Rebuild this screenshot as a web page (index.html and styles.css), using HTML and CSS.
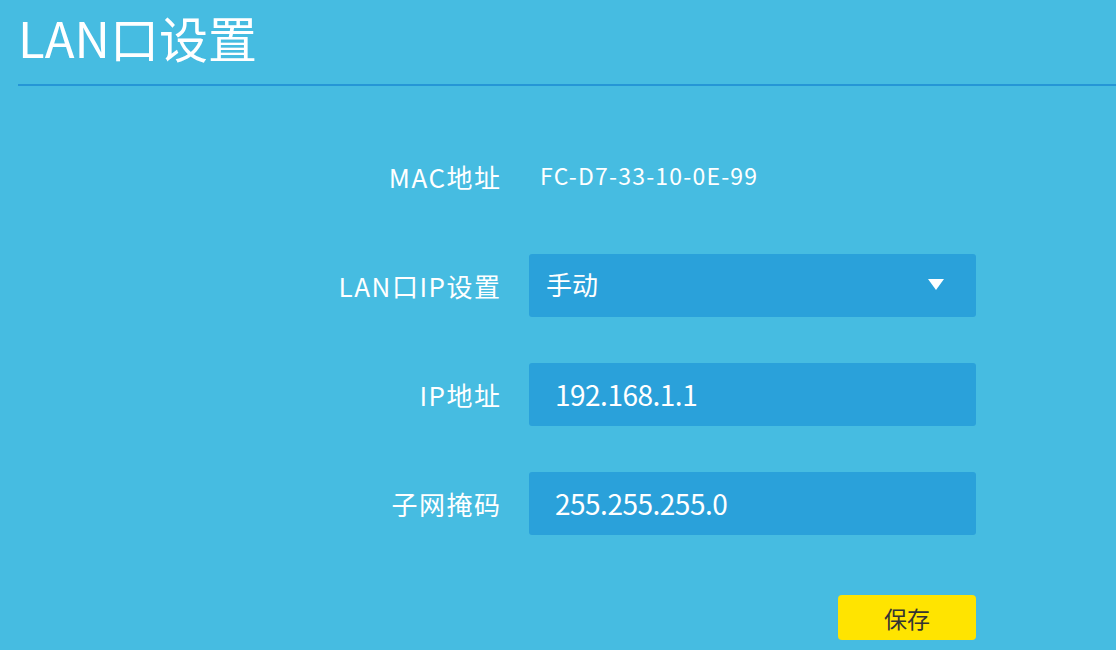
FILE: index.html
```html
<!DOCTYPE html>
<html lang="zh-CN">
<head>
<meta charset="utf-8">
<title>LAN口设置</title>
<link rel="stylesheet" href="styles.css">
</head>
<body>
<div class="page">
  <header class="head">
    <h1 class="title">LAN口设置</h1>
  </header>
  <form class="form">
    <div class="row">
      <label class="label">MAC地址</label>
      <div class="value">FC-D7-33-10-0E-99</div>
    </div>
    <div class="row">
      <label class="label">LAN口IP设置</label>
      <div class="field select">
        <span class="select-text">手动</span>
        <svg class="caret" width="16" height="11" viewBox="0 0 16 11"><path d="M0 0H16L8 11Z" fill="#fff"/></svg>
      </div>
    </div>
    <div class="row">
      <label class="label">IP地址</label>
      <div class="field input">192.168.1.1</div>
    </div>
    <div class="row">
      <label class="label">子网掩码</label>
      <div class="field input">255.255.255.0</div>
    </div>
    <div class="actions">
      <button type="button" class="save">保存</button>
    </div>
  </form>
</div>
</body>
</html>
```
FILE: styles.css
```css
html, body {
  margin: 0;
  padding: 0;
}
body {
  background: #46bce1;
  font-family: "Noto Sans CJK SC", "Noto Sans", sans-serif;
  color: #fff;
  width: 1116px;
  height: 650px;
  overflow: hidden;
}
.page {
  display: flex;
  flex-direction: column;
}
.head {
  margin-left: 18px;
  height: 84px;
  border-bottom: 2px solid #2596d6;
  display: flex;
  align-items: flex-start;
}
.title {
  margin: 0;
  font-weight: 400;
  font-size: 49px;
  line-height: 1;
  padding-top: 12px;
  letter-spacing: 0;
}
.form {
  display: flex;
  flex-direction: column;
  gap: 45px;
  margin-top: 58px;
}
.row {
  display: flex;
  align-items: center;
  gap: 29px;
  height: 64px;
}
.label {
  width: 501.5px;
  flex: none;
  text-align: right;
  font-size: 26px;
  letter-spacing: 1.5px;
  margin-right: -1.5px;
  white-space: nowrap;
}
.value {
  font-size: 23px;
  letter-spacing: 1.2px;
  padding-left: 11px;
  padding-bottom: 2px;
}
.field {
  width: 447px;
  height: 63px;
  box-sizing: border-box;
  background: #2aa1da;
  border-radius: 3px;
  display: flex;
  align-items: center;
}
.select {
  padding: 0 32px 0 17px;
  justify-content: space-between;
  font-size: 26px;
}
.select-text {
  padding-bottom: 3px;
}
.caret {
  margin-top: -2px;
}
.input {
  padding-left: 26px;
  font-size: 28px;
  letter-spacing: -0.5px;
}
.actions {
  display: flex;
  justify-content: flex-start;
  padding-left: 838px;
  margin-top: 15px;
}
.save {
  width: 138px;
  height: 45px;
  background: #ffe400;
  border: none;
  border-radius: 4px;
  font-family: "Noto Sans CJK SC", sans-serif;
  font-size: 23px;
  color: #333;
  padding: 0;
}
```
